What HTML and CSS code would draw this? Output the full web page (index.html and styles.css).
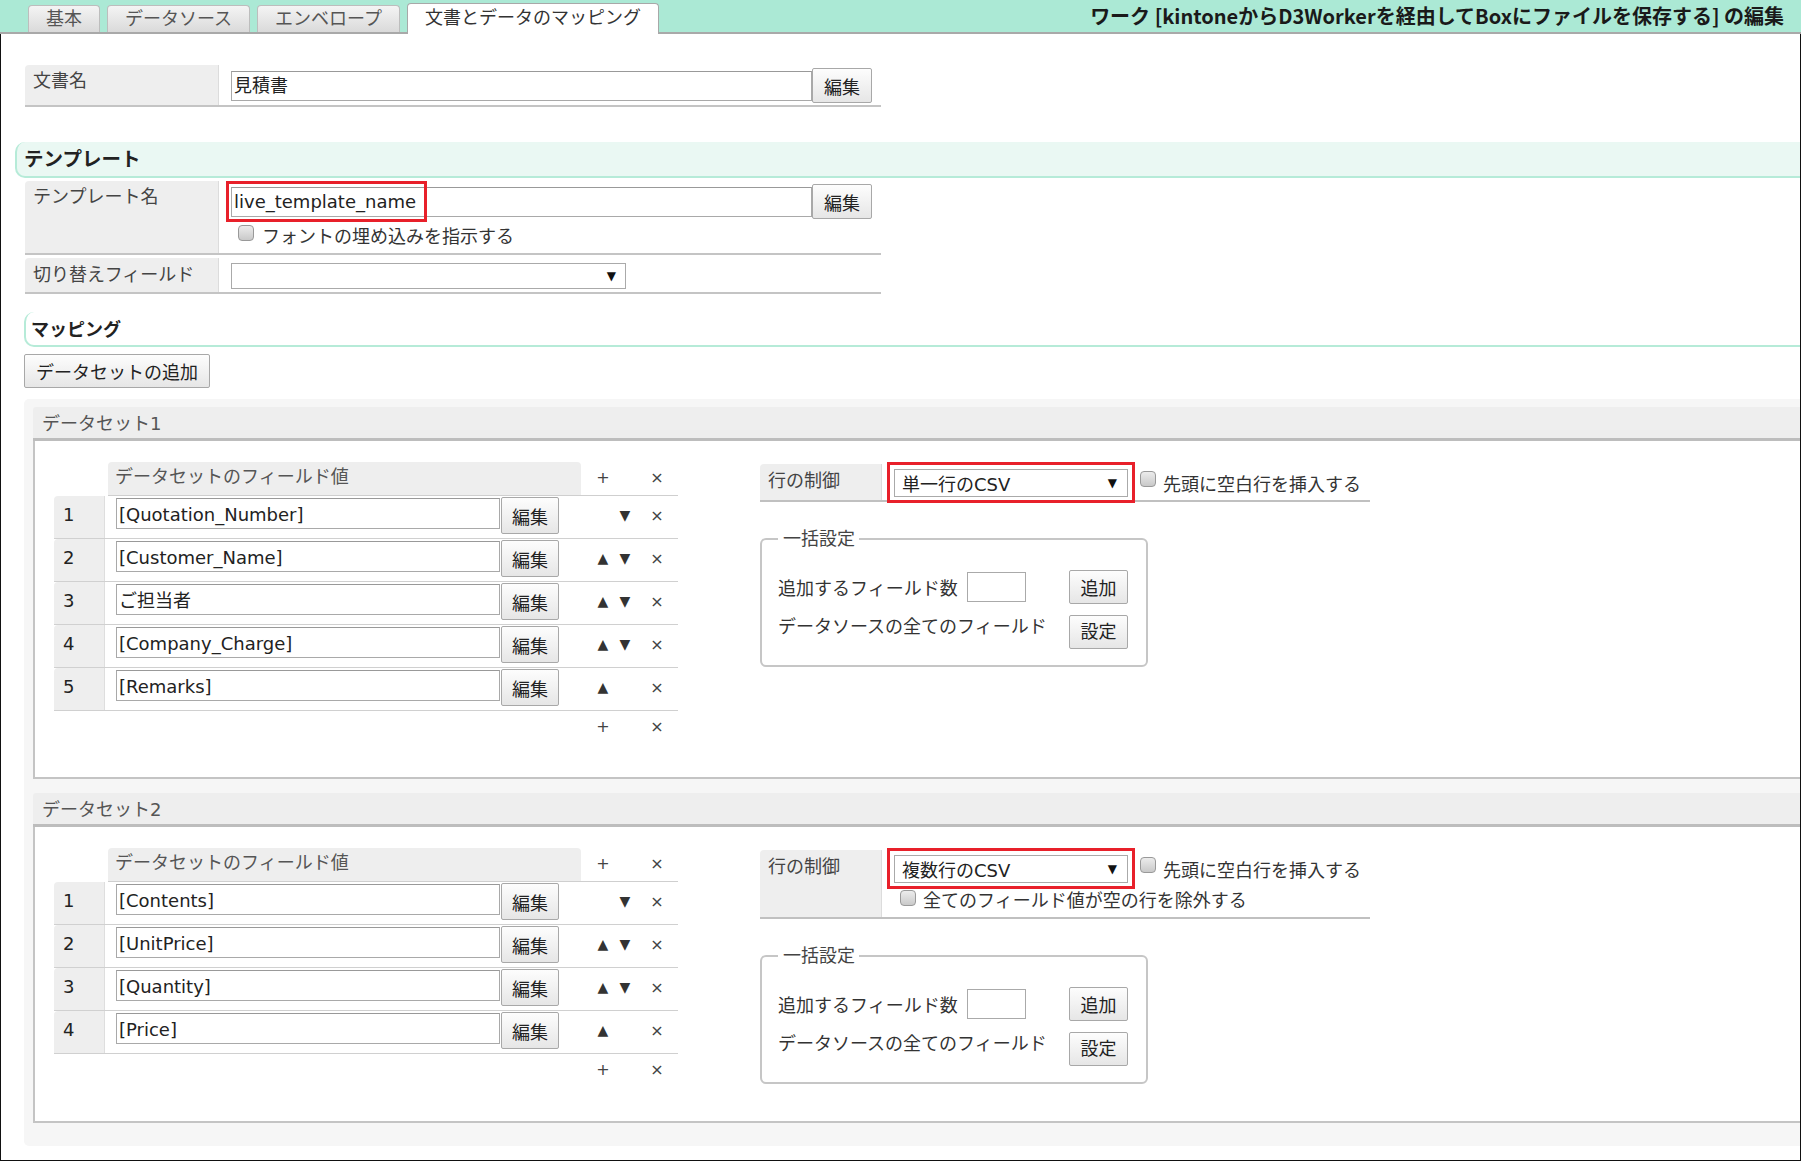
FILE: index.html
```html
<!DOCTYPE html>
<html lang="ja">
<head>
<meta charset="utf-8">
<title>ワークの編集</title>
<link rel="stylesheet" href="styles.css">
</head>
<body>
<header class="topbar">
  <nav class="tabs">
    <div class="tab">基本</div>
    <div class="tab">データソース</div>
    <div class="tab">エンベロープ</div>
    <div class="tab active">文書とデータのマッピング</div>
  </nav>
  <h1 class="title">ワーク [kintoneからD3Workerを経由してBoxにファイルを保存する] の編集</h1>
</header>

<main class="page">
  <div class="form-row doc-row">
    <div class="form-label">文書名</div>
    <div class="form-value">
      <div class="line">
        <div class="text-input wide">見積書</div>
        <button class="btn edit-btn">編集</button>
      </div>
    </div>
  </div>

  <h2 class="template-head">テンプレート</h2>

  <div class="form-row tpl-row">
    <div class="form-label">テンプレート名</div>
    <div class="form-value">
      <div class="line">
        <div class="text-input wide">live_template_name</div>
        <button class="btn edit-btn">編集</button>
      </div>
      <div class="check-line tpl-check"><span class="checkbox"></span><span>フォントの埋め込みを指示する</span></div>
      <div class="redbox redbox-tpl"></div>
    </div>
  </div>

  <div class="form-row switch-row">
    <div class="form-label">切り替えフィールド</div>
    <div class="form-value">
      <div class="select switch"><span></span><span class="arrow">▼</span></div>
    </div>
  </div>

  <h2 class="mapping-head">マッピング</h2>

  <button class="btn add-ds-btn">データセットの追加</button>

  <div class="ds-wrap">
    <section class="ds ds1">
      <div class="ds-head">データセット1</div>
      <div class="ds-body">
        <div class="ftable">
          <div class="fhead">
            <div class="fhead-cell">データセットのフィールド値</div>
            <div class="ctl head-ctl"><span class="sym">+</span><span></span><span class="sym x">×</span></div>
          </div>
          <div class="frow">
            <div class="fnum">1</div>
            <div class="fval"><div class="text-input">[Quotation_Number]</div><button class="btn fbtn">編集</button></div>
            <div class="ctl"><span></span><span class="tri">▼</span><span class="sym x">×</span></div>
          </div>
          <div class="frow">
            <div class="fnum">2</div>
            <div class="fval"><div class="text-input">[Customer_Name]</div><button class="btn fbtn">編集</button></div>
            <div class="ctl"><span class="tri">▲</span><span class="tri">▼</span><span class="sym x">×</span></div>
          </div>
          <div class="frow">
            <div class="fnum">3</div>
            <div class="fval"><div class="text-input">ご担当者</div><button class="btn fbtn">編集</button></div>
            <div class="ctl"><span class="tri">▲</span><span class="tri">▼</span><span class="sym x">×</span></div>
          </div>
          <div class="frow">
            <div class="fnum">4</div>
            <div class="fval"><div class="text-input">[Company_Charge]</div><button class="btn fbtn">編集</button></div>
            <div class="ctl"><span class="tri">▲</span><span class="tri">▼</span><span class="sym x">×</span></div>
          </div>
          <div class="frow">
            <div class="fnum">5</div>
            <div class="fval"><div class="text-input">[Remarks]</div><button class="btn fbtn">編集</button></div>
            <div class="ctl"><span class="tri">▲</span><span></span><span class="sym x">×</span></div>
          </div>
          <div class="ffoot ctl"><span class="sym">+</span><span></span><span class="sym x">×</span></div>
        </div>

        <div class="rpanel">
          <div class="ctl-row ctl-row1">
            <div class="ctl-label">行の制御</div>
            <div class="ctl-value">
              <div class="ctl-line">
                <div class="select rowctl"><span>単一行のCSV</span><span class="arrow">▼</span></div>
                <span class="checkbox first-check"></span><span class="check-text">先頭に空白行を挿入する</span>
              </div>
              <div class="redbox redbox-ctl"></div>
            </div>
          </div>
          <fieldset class="bulk">
            <legend>一括設定</legend>
            <div class="bulk-row">
              <span>追加するフィールド数</span>
              <div class="num-input"></div>
              <button class="btn small-btn">追加</button>
            </div>
            <div class="bulk-row bulk-row2">
              <span>データソースの全てのフィールド</span>
              <button class="btn small-btn">設定</button>
            </div>
          </fieldset>
        </div>
      </div>
    </section>

    <section class="ds ds2">
      <div class="ds-head">データセット2</div>
      <div class="ds-body">
        <div class="ftable">
          <div class="fhead">
            <div class="fhead-cell">データセットのフィールド値</div>
            <div class="ctl head-ctl"><span class="sym">+</span><span></span><span class="sym x">×</span></div>
          </div>
          <div class="frow">
            <div class="fnum">1</div>
            <div class="fval"><div class="text-input">[Contents]</div><button class="btn fbtn">編集</button></div>
            <div class="ctl"><span></span><span class="tri">▼</span><span class="sym x">×</span></div>
          </div>
          <div class="frow">
            <div class="fnum">2</div>
            <div class="fval"><div class="text-input">[UnitPrice]</div><button class="btn fbtn">編集</button></div>
            <div class="ctl"><span class="tri">▲</span><span class="tri">▼</span><span class="sym x">×</span></div>
          </div>
          <div class="frow">
            <div class="fnum">3</div>
            <div class="fval"><div class="text-input">[Quantity]</div><button class="btn fbtn">編集</button></div>
            <div class="ctl"><span class="tri">▲</span><span class="tri">▼</span><span class="sym x">×</span></div>
          </div>
          <div class="frow">
            <div class="fnum">4</div>
            <div class="fval"><div class="text-input">[Price]</div><button class="btn fbtn">編集</button></div>
            <div class="ctl"><span class="tri">▲</span><span></span><span class="sym x">×</span></div>
          </div>
          <div class="ffoot ctl"><span class="sym">+</span><span></span><span class="sym x">×</span></div>
        </div>

        <div class="rpanel">
          <div class="ctl-row ctl-row2">
            <div class="ctl-label">行の制御</div>
            <div class="ctl-value">
              <div class="ctl-line">
                <div class="select rowctl"><span>複数行のCSV</span><span class="arrow">▼</span></div>
                <span class="checkbox first-check"></span><span class="check-text">先頭に空白行を挿入する</span>
              </div>
              <div class="check-line exclude-check"><span class="checkbox"></span><span>全てのフィールド値が空の行を除外する</span></div>
              <div class="redbox redbox-ctl"></div>
            </div>
          </div>
          <fieldset class="bulk">
            <legend>一括設定</legend>
            <div class="bulk-row">
              <span>追加するフィールド数</span>
              <div class="num-input"></div>
              <button class="btn small-btn">追加</button>
            </div>
            <div class="bulk-row bulk-row2">
              <span>データソースの全てのフィールド</span>
              <button class="btn small-btn">設定</button>
            </div>
          </fieldset>
        </div>
      </div>
    </section>
  </div>
</main>
</body>
</html>
```

FILE: styles.css
```css
* { box-sizing: border-box; }
html, body { margin: 0; padding: 0; }
body {
  width: 1801px;
  height: 1161px;
  overflow: hidden;
  font-family: "DejaVu Sans", "Noto Sans CJK JP", sans-serif;
  font-size: 18px;
  color: #333;
  background: #fff;
}

/* top bar */
.topbar {
  height: 34px;
  background: #abe9d5;
  border-bottom: 2px solid #a9a9a9;
  display: flex;
  justify-content: space-between;
  align-items: flex-end;
}
.tabs {
  display: flex;
  align-items: flex-end;
  gap: 7px;
  padding-left: 28px;
  height: 32px;
}
.tab {
  height: 27px;
  padding: 0 17px;
  line-height: 26px;
  border: 1px solid #bdbdbd;
  border-bottom: none;
  border-radius: 4px 4px 0 0;
  background: linear-gradient(#f4f4f4, #dadada);
  color: #555;
  white-space: nowrap;
}
.tab.active {
  height: 31px;
  margin-bottom: -2px;
  background: #fff;
  border-color: #a8a8a8;
  color: #333;
  line-height: 28px;
}
.title {
  margin: 0 17px 0 0;
  align-self: center;
  font-family: "Noto Sans CJK JP", sans-serif;
  font-size: 20px;
  font-weight: bold;
  line-height: 32px;
  color: #1a1a1a;
  white-space: nowrap;
}

/* page */
.page {
  height: 1127px;
  border: 1px solid #111;
  border-top: none;
  padding-left: 23px;
  overflow: hidden;
}

.form-row {
  display: flex;
  width: 856px;
  margin-left: 1px;
  border-bottom: 2px solid #c4c4c4;
}
.form-label {
  width: 194px;
  flex: none;
  background: #eee;
  border-right: 1px solid #dcdcdc;
  border-radius: 4px 0 0 0;
  padding: 3px 8px 0;
  line-height: 26px;
  color: #444;
}
.form-value {
  position: relative;
  flex: 1;
  padding: 3px 0 0 12px;
}
.doc-row { margin-top: 31px; height: 42px; }
.tpl-row { margin-top: 3px; height: 74px; }
.tpl-row .form-label { padding-top: 3px; }
.tpl-row .form-value { padding-top: 3px; }
.switch-row { margin-top: 3px; height: 36px; }
.switch-row .form-label { padding-top: 4px; }
.switch-row .form-value { padding-top: 5px; }

.line { display: flex; align-items: center; }

.text-input {
  height: 30px;
  border: 1px solid #a9a9a9;
  border-top-color: #999;
  background: #fff;
  padding: 0 2px;
  line-height: 28px;
  color: #222;
  white-space: nowrap;
  overflow: hidden;
}
.text-input.wide { width: 581px; }

.btn {
  font: inherit;
  color: #222;
  background: linear-gradient(#fdfdfd, #e6e6e6);
  border: 1px solid #a8a8a8;
  border-radius: 2px;
  padding: 0;
  margin: 0;
  white-space: nowrap;
}
.edit-btn { width: 60px; height: 35px; }

.check-line {
  display: flex;
  align-items: flex-start;
  height: 24px;
  gap: 8px;
  line-height: 24px;
  color: #333;
}
.tpl-check { margin: 6px 0 0 7px; }
.checkbox {
  flex: none;
  width: 16px;
  height: 16px;
  border: 1px solid #999;
  border-radius: 4px;
  background: linear-gradient(#ececec, #c9c9c9);
}

.redbox {
  position: absolute;
  border: 3px solid #e8202a;
  pointer-events: none;
}
.redbox-tpl { left: 7px; top: 0; width: 201px; height: 41px; }
.redbox-ctl { left: 5px; top: -2px; width: 248px; height: 41px; }

.select {
  display: flex;
  align-items: center;
  justify-content: space-between;
  height: 26px;
  border: 1px solid #aaa;
  background: #fff;
  padding: 0 9px 0 7px;
  color: #222;
  white-space: nowrap;
}
.select .arrow { font-size: 12px; color: #111; }
.select.switch { width: 395px; }

/* section heads */
.template-head {
  margin: 35px 0 0 -9px;
  height: 36px;
  background: #eaf8f3;
  border-left: 2px solid #b6ebd8;
  border-bottom: 2px solid #b6ebd8;
  border-radius: 10px 0 0 10px;
  padding-left: 7px;
  font-family: "Noto Sans CJK JP", sans-serif;
  font-size: 19.5px;
  font-weight: bold;
  line-height: 31px;
  color: #222;
}
.mapping-head {
  margin: 18px 0 0 0;
  height: 35px;
  border-left: 2px solid #b6ebd8;
  border-bottom: 2px solid #b6ebd8;
  border-radius: 10px 0 0 10px;
  padding-left: 5px;
  font-family: "Noto Sans CJK JP", sans-serif;
  font-size: 18px;
  font-weight: bold;
  line-height: 32px;
  color: #222;
}

.add-ds-btn {
  display: block;
  margin-top: 7px;
  width: 186px;
  height: 34px;
}

/* datasets */
.ds-wrap {
  margin-top: 11px;
  margin-right: -30px;
  height: 747px;
  background: #f6f6f6;
  border-radius: 5px;
  padding: 8px 0 0 9px;
}
.ds + .ds { margin-top: 14px; }
.ds-head {
  height: 34px;
  background: #eee;
  border-bottom: 3px solid #bdbdbd;
  border-radius: 3px 3px 0 0;
  padding-left: 9px;
  line-height: 34px;
  color: #555;
}
.ds-body {
  display: flex;
  align-items: flex-start;
  background: #fff;
  border: 2px solid #c4c4c4;
  border-top: none;
  padding: 21px 0 0 19px;
}
.ds1 .ds-body { height: 338px; }
.ds2 .ds-body { height: 296px; }

.ftable { width: 624px; flex: none; }
.fhead {
  display: flex;
  height: 34px;
  margin-left: 54px;
  border-bottom: 1px solid #cfcfcf;
}
.fhead-cell {
  width: 473px;
  flex: none;
  background: #eee;
  border-radius: 4px 4px 0 0;
  padding-left: 7px;
  line-height: 30px;
  color: #555;
}
.ctl { display: flex; align-items: center; }
.ctl span { width: 22px; flex: none; text-align: center; }
.ctl span.x { margin-left: 10px; }
.head-ctl { padding-left: 11px; height: 30px; }
.sym { color: #444; font-size: 16px; }
.tri { color: #333; font-size: 14px; }

.frow {
  display: flex;
  height: 43px;
  border-bottom: 1px solid #d0d0d0;
}
.fnum {
  width: 51px;
  flex: none;
  background: #eee;
  border-right: 1px solid #dedede;
  border-radius: 4px 0 0 0;
  padding-left: 9px;
  line-height: 38px;
  color: #222;
}
.fval {
  width: 454px;
  flex: none;
  display: flex;
  align-items: flex-start;
  padding: 1px 0 0 11px;
}
.fval .text-input { width: 384px; height: 31px; margin-top: 1px; line-height: 31px; }
.fbtn { width: 58px; height: 37px; margin-left: 1px; }
.frow .ctl { padding-left: 33px; height: 38px; }
.ffoot { height: 30px; padding-left: 538px; }

.rpanel { margin: 2px 0 0 82px; width: 610px; flex: none; }
.ctl-row {
  display: flex;
  border-bottom: 2px solid #c0c0c0;
}
.ctl-row1 { height: 38px; }
.ctl-row2 { height: 69px; }
.ctl-label {
  width: 122px;
  flex: none;
  background: #eee;
  border-right: 1px solid #dcdcdc;
  border-radius: 4px 0 0 0;
  padding: 4px 8px 0;
  line-height: 26px;
  color: #444;
}
.ctl-value { position: relative; flex: 1; padding: 5px 0 0 12px; }
.ctl-line { display: flex; align-items: flex-start; }
.select.rowctl { width: 234px; height: 28px; padding-right: 10px; }
.first-check { margin: 2px 0 0 12px; }
.check-text { margin-left: 7px; line-height: 31px; white-space: nowrap; }
.exclude-check { margin: 3px 0 0 6px; gap: 7px; }
.exclude-check .checkbox { margin-top: 1px; }

.bulk {
  margin: 27px 0 0 0;
  width: 388px;
  border: 2px solid #c6c6c6;
  border-radius: 6px;
  padding: 21px 18px 16px 16px;
  min-inline-size: 0;
}
.bulk legend {
  padding: 0 4px 0 5px;
  line-height: 20px;
  color: #444;
}
.bulk-row {
  display: flex;
  align-items: center;
  height: 34px;
  white-space: nowrap;
}
.bulk-row1-label { line-height: 30px; }
.bulk-row2 { margin-top: 11px; align-items: flex-start; line-height: 24px; }
.num-input {
  width: 59px;
  height: 30px;
  margin-left: 9px;
  border: 1px solid #aaa;
  background: #fff;
}
.small-btn { width: 59px; height: 34px; margin-left: auto; }
```
